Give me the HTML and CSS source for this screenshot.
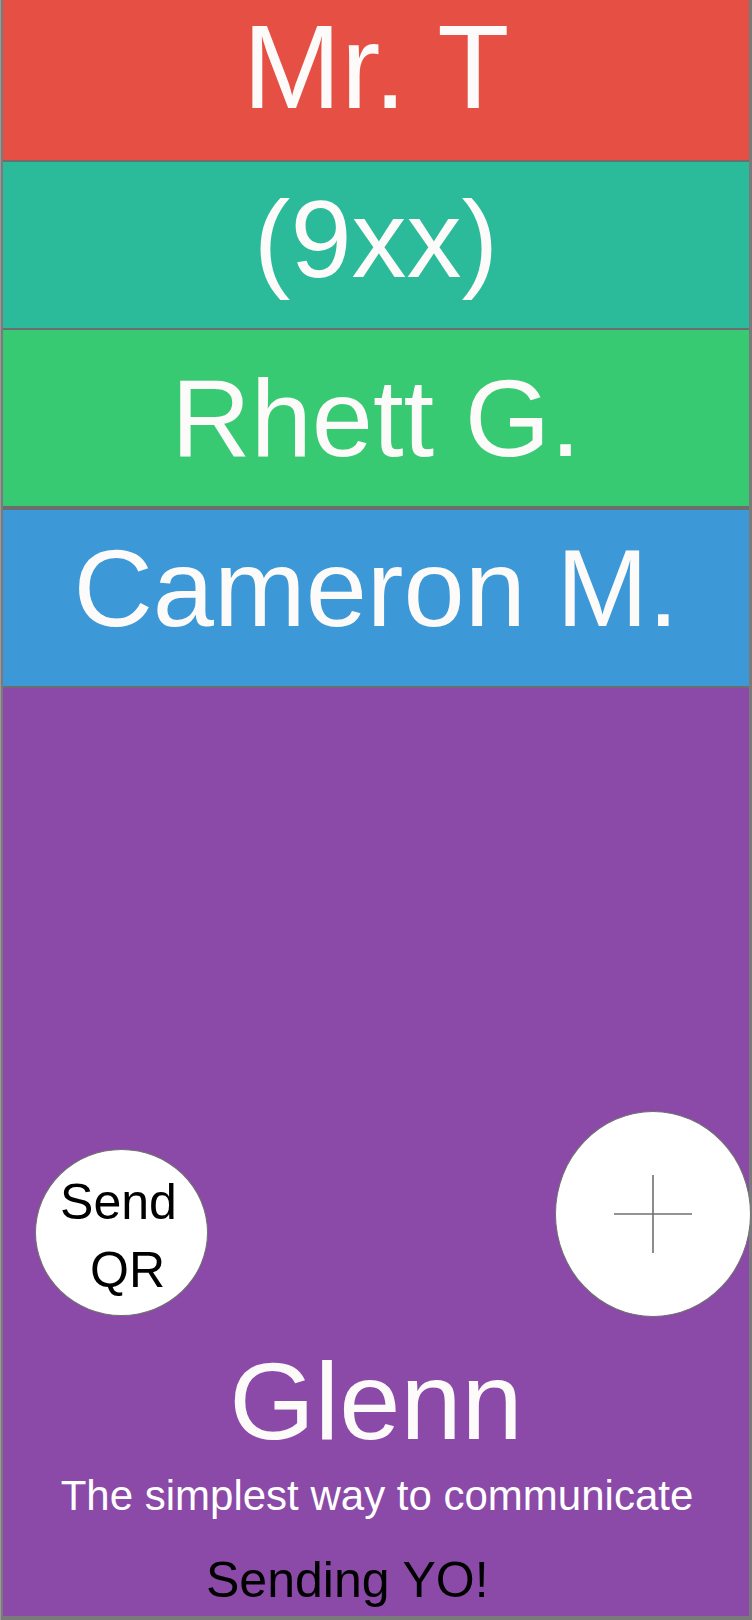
FILE: index.html
```html
<!DOCTYPE html>
<html>
<head>
<meta charset="utf-8">
<link rel="stylesheet" href="styles.css">
</head>
<body>
<div class="app">
  <div class="contact red">Mr. T</div>
  <div class="contact teal">(9xx)</div>
  <div class="contact green">Rhett G.</div>
  <div class="contact blue">Cameron M.</div>
  <div class="home">
    <div class="buttons">
      <div class="btn-qr"><span class="l1">Send</span><span class="l2">QR</span></div>
      <div class="btn-add">
        <svg width="80" height="80" viewBox="0 0 80 80"><path d="M1 40H79M40 1V79" stroke="#707070" stroke-width="1.6" fill="none"/></svg>
      </div>
    </div>
    <div class="title">Glenn</div>
    <div class="tagline">The simplest way to communicate</div>
    <div class="status">Sending YO!</div>
  </div>
</div>
</body>
</html>
```

FILE: styles.css
```css
html, body {
  margin: 0;
  padding: 0;
}
body {
  background: #7a7a7a;
  font-family: "Liberation Sans", Arial, sans-serif;
  width: 752px;
  height: 1620px;
  overflow: hidden;
  border-left: 1px solid #9a9a9a;
  box-sizing: border-box;
}
.app {
  margin-left: 2px;
  width: 746px;
  display: flex;
  flex-direction: column;
}
.contact {
  color: #fcfbf9;
  font-size: 110px;
  line-height: 110px;
  text-align: center;
  box-sizing: border-box;
  border-bottom: 2px solid #6d6d6d;
}
.red {
  background: #e65044;
  height: 162px;
  padding-top: 12px;
  font-size: 118px;
}
.teal {
  background: #2bbb9a;
  height: 168px;
  padding-top: 22px;
}
.green {
  background: #38ca73;
  height: 180px;
  padding-top: 33px;
  border-bottom-width: 4px;
}
.blue {
  background: #3c98d6;
  height: 178px;
  padding-top: 23px;
}
.home {
  background: #8b49a8;
  height: 928px;
  box-sizing: border-box;
  padding-top: 423px;
  display: flex;
  flex-direction: column;
}
.buttons {
  display: flex;
  justify-content: space-between;
  align-items: flex-end;
  padding-left: 32px;
  margin-right: -2px;
}
.btn-qr {
  width: 173px;
  height: 167px;
  border-radius: 50%;
  background: #fff;
  border: 1px solid #707070;
  box-sizing: border-box;
  display: flex;
  flex-direction: column;
  align-items: center;
  justify-content: center;
  padding-top: 6px;
  font-size: 50px;
  line-height: 68px;
  color: #000;
  margin-bottom: 1px;
}
.btn-qr .l1 {
  padding-right: 6px;
}
.btn-qr .l2 {
  padding-left: 12px;
}
.btn-add {
  width: 196px;
  height: 206px;
  border-radius: 50%;
  background: #fff;
  border: 1px solid #707070;
  box-sizing: border-box;
  display: flex;
  align-items: center;
  justify-content: center;
}
.title {
  color: #fcfbf9;
  font-size: 110px;
  line-height: 110px;
  text-align: center;
  margin-top: 29px;
}
.tagline {
  color: #fff;
  font-size: 42px;
  line-height: 48px;
  text-align: center;
  margin-top: 16px;
  padding-left: 2px;
}
.status {
  color: #000;
  font-size: 50px;
  line-height: 56px;
  margin-top: 32px;
  padding-left: 203px;
}
```
